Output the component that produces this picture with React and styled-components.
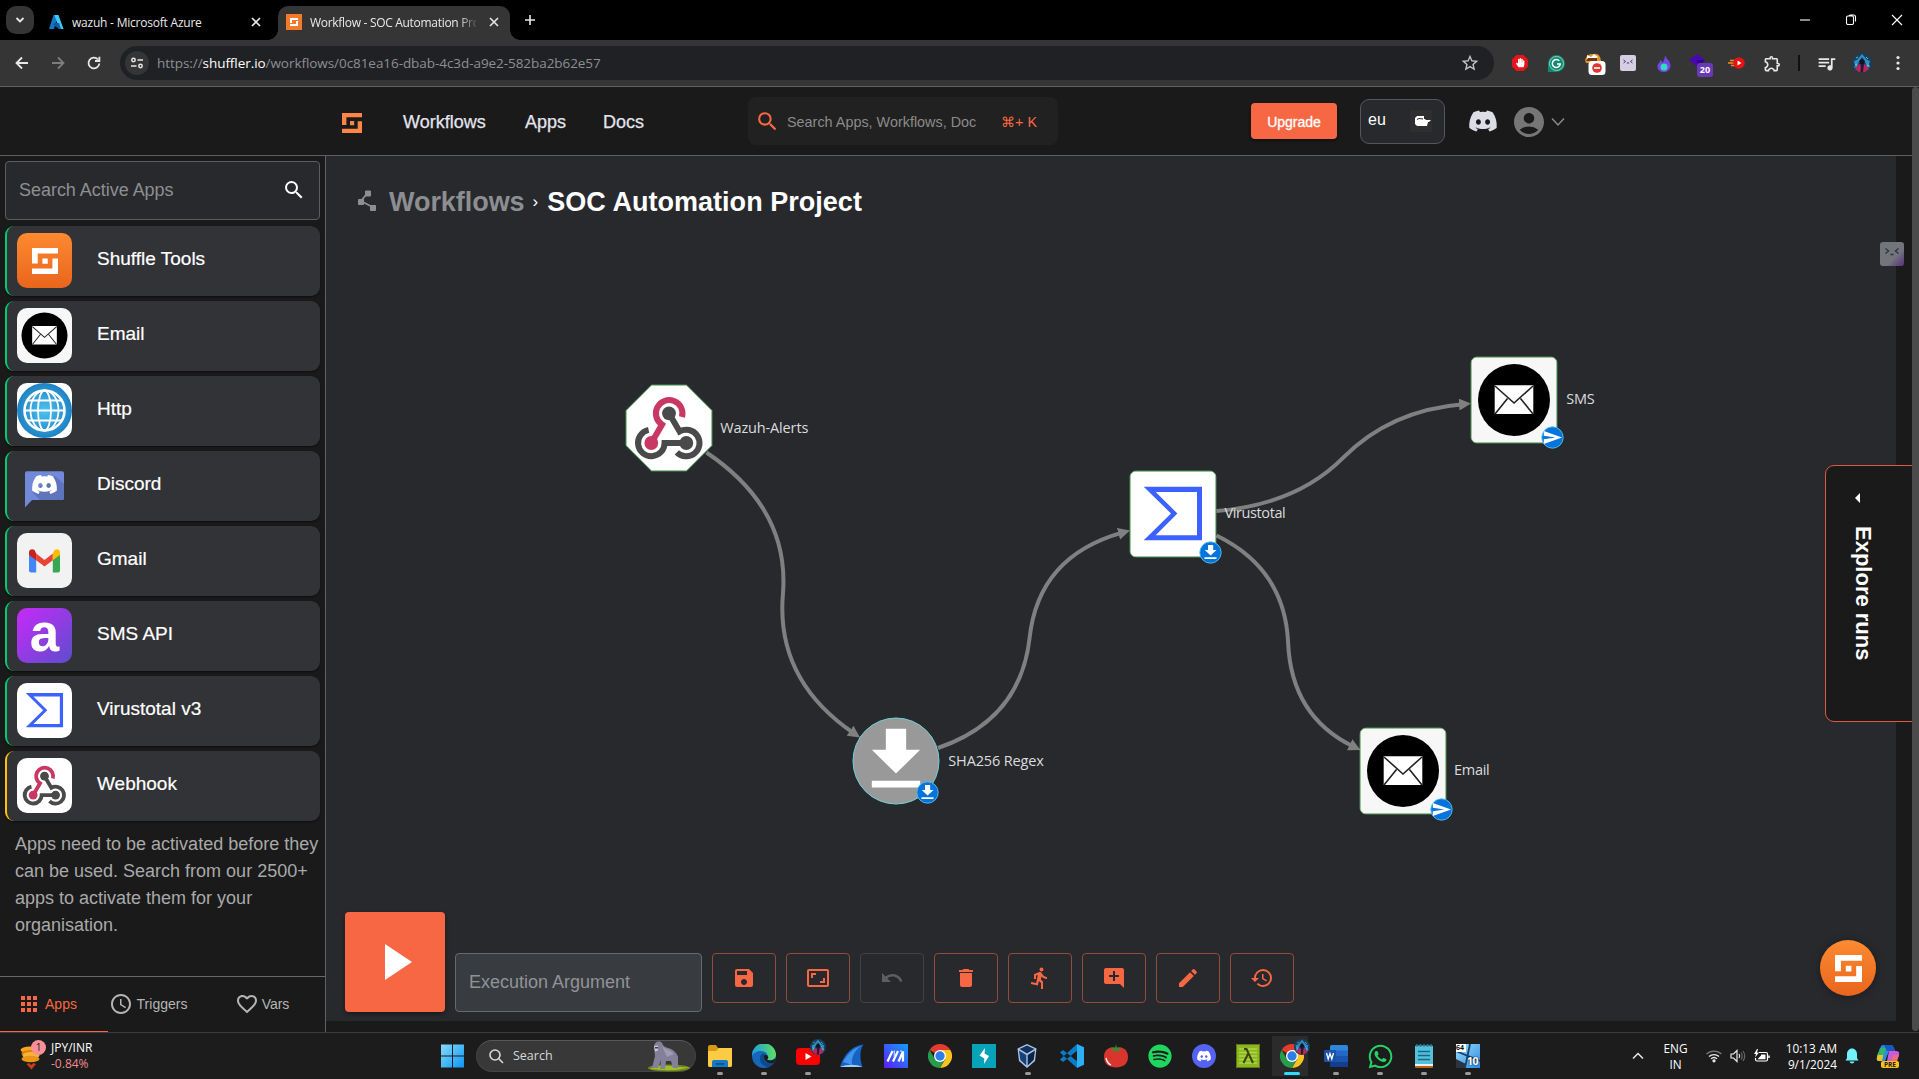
import React from "react";
import styled, { createGlobalStyle, css } from "styled-components";
import {
  MdSave, MdAspectRatio, MdUndo, MdDelete, MdDirectionsRun, MdAddComment, MdEdit,
  MdHistory, MdSearch, MdApps, MdAccessTime, MdFavoriteBorder,
  MdOutlineQueueMusic, MdStarOutline, MdOutlineExtension, MdAccountCircle,
} from "react-icons/md";
import { FaDiscord, FaSpotify, FaWhatsapp, FaHandPaper } from "react-icons/fa";

const ORANGE = "#f86743";
const UI = '"Open Sans", "Noto Sans", sans-serif';
const ARIAL = '"Liberation Sans", Arial, sans-serif';

const Global = createGlobalStyle`
  * { box-sizing: border-box; }
  body { margin: 0; background: #1a1a1a; overflow: hidden; font-family: ${ARIAL}; }
  svg { display: block; flex: none; }
`;

const Screen = styled.div`
  width: 1919px;
  height: 1079px;
  display: flex;
  flex-direction: column;
  overflow: hidden;
  color: #fff;
`;

/* ---------- browser frame ---------- */

const TabStrip = styled.div`
  height: 40px;
  background: #000;
  display: flex;
  align-items: flex-end;
  padding-left: 6px;
  font-family: ${UI};
  font-size: 12px;
`;
const TabMenu = styled.div`
  width: 28px;
  height: 28px;
  margin-bottom: 6px;
  border-radius: 10px;
  background: #353535;
  display: grid;
  place-items: center;
`;
const Tab = styled.div`
  position: relative;
  height: 34px;
  width: ${(p) => p.$w}px;
  padding: 0 8px 2px;
  margin-left: ${(p) => p.$ml}px;
  display: flex;
  align-items: center;
  border-radius: 10px 10px 0 0;
  background: ${(p) => (p.$active ? "#353535" : "transparent")};
  ${(p) => p.$active && css`
    &::before, &::after {
      content: "";
      position: absolute;
      bottom: 0;
      width: 10px;
      height: 10px;
    }
    &::before { left: -10px; background: radial-gradient(circle at 0 0, transparent 9.5px, #353535 10px); }
    &::after { right: -10px; background: radial-gradient(circle at 100% 0, transparent 9.5px, #353535 10px); }
  `}
`;
const TabTitle = styled.span`
  flex: 1;
  margin-left: 8px;
  margin-right: 10px;
  white-space: nowrap;
  overflow: hidden;
  color: #e9e9e9;
  letter-spacing: ${(p) => p.$ls}px;
  ${(p) => p.$fade && css`mask-image: linear-gradient(90deg, #000 148px, transparent 170px);`}
`;
const NewTab = styled.div`
  width: 28px;
  height: 28px;
  margin: 0 0 6px 6px;
  display: grid;
  place-items: center;
`;
const WindowButtons = styled.div`
  margin-left: auto;
  margin-right: -1px;
  height: 40px;
  display: flex;
`;
const WindowButton = styled.div`
  width: 46px;
  height: 40px;
  display: grid;
  place-items: center;
`;
const Toolbar = styled.div`
  height: 47px;
  background: #353535;
  border-bottom: 1px solid #606060;
  display: flex;
  align-items: center;
`;
const NavButtons = styled.div`
  width: 120px;
  padding-left: 4px;
  display: flex;
`;
const NavButton = styled.div`
  width: 36px;
  height: 36px;
  display: grid;
  place-items: center;
`;
const AddressBar = styled.div`
  width: 1374px;
  height: 34px;
  border-radius: 17px;
  background: #202124;
  padding: 0 14px 0 5px;
  display: flex;
  align-items: center;
  font: 13.5px ${UI};
  color: #8d8f93;
`;
const SiteInfo = styled.div`
  width: 24px;
  height: 24px;
  border-radius: 50%;
  background: #353535;
  display: grid;
  place-items: center;
  margin-right: 8px;
`;
const Url = styled.div`
  flex: 1;
  letter-spacing: ${(p) => p.$ls}px;
  b { font-weight: 400; color: #fff; }
`;
const Extensions = styled.div`
  display: flex;
  margin-left: 8px;
`;
const Extension = styled.div`
  position: relative;
  width: 36px;
  height: 36px;
  display: grid;
  place-items: center;
  padding-left: ${(p) => p.$nudge || 0}px;
`;
const CountBadge = styled.div`
  position: absolute;
  left: 15px;
  top: 18px;
  width: 16px;
  height: 14px;
  border-radius: 3px;
  background: #6b39b8;
  font: 700 9px/14px ${UI};
  text-align: center;
`;
const BarDivider = styled.div`
  width: 2px;
  height: 16px;
  margin: 10px 8px;
  background: #111;
`;

/* ---------- web page ---------- */

const Page = styled.div`
  height: 945px;
  display: flex;
  background: #1a1a1a;
`;
const Site = styled.div`
  position: relative;
  width: 1912px;
  display: flex;
  flex-direction: column;
`;
const Scrollbar = styled.div`
  width: 7px;
  height: 944px;
  border-radius: 4px;
  background: #4b4b4b;
`;
const Header = styled.header`
  height: 69px;
  border-bottom: 1px solid #5f5f63;
  padding-left: 342px;
  display: flex;
  align-items: center;
`;
const LogoBox = styled.div`
  width: 61px;
  padding-top: 3px;
`;
const NavLink = styled.a`
  width: ${(p) => p.$w}px;
  padding-top: 2px;
  font-size: 18px;
  color: #e3e4ee;
  -webkit-text-stroke: 0.25px #e3e4ee;
`;
const SiteSearch = styled.div`
  width: 310px;
  height: 48px;
  margin-bottom: 1px;
  border-radius: 8px;
  background: #212121;
  display: flex;
  align-items: center;
  padding: 2px 21px 0 7px;
  font-size: 14.4px;
  color: #8b8b8b;
  svg { color: ${ORANGE}; margin-right: 7px; }
`;
const Shortcut = styled.span`
  margin-left: auto;
  color: ${ORANGE};
  font-family: ${ARIAL};
`;
const UpgradeButton = styled.button`
  margin-left: 193px;
  width: 86px;
  height: 36px;
  padding: 2px 0 0;
  border: 0;
  border-radius: 4px;
  background: ${ORANGE};
  color: #fff;
  font: 14px ${ARIAL};
  -webkit-text-stroke: 0.3px #fff;
  box-shadow: 0 2px 3px rgba(0, 0, 0, 0.4);
`;
const RegionSelect = styled.div`
  margin-left: 23px;
  margin-top: 1px;
  width: 85px;
  height: 45px;
  border: 1px solid #54565b;
  border-radius: 9px;
  background: #27292d;
  padding: 0 12px 3px 7px;
  display: flex;
  align-items: center;
  justify-content: space-between;
  font-size: 16px;
`;
const Flag = styled.div`
  width: 22px;
  height: 22px;
  margin-top: 2px;
  padding-left: 4px;
  background: #2f2f2f;
  display: grid;
  place-items: center;
`;
const DiscordLink = styled.div`
  margin-left: 23px;
  width: 46px;
  color: #dcdde6;
`;
const Account = styled.div`
  display: flex;
  align-items: center;
  gap: 3px;
  margin-left: -3px;
  padding-top: 1px;
  color: #767676;
`;
const Body = styled.div`
  height: 876px;
  display: flex;
`;

/* ---------- sidebar ---------- */

const Sidebar = styled.aside`
  width: 326px;
  border-right: 1px solid #5f6166;
  display: flex;
  flex-direction: column;
`;
const AppSearch = styled.div`
  height: 59px;
  margin: 5px 5px 6px;
  border: 1px solid #5b5d61;
  border-radius: 4px;
  background: #27292d;
  display: flex;
  align-items: center;
  justify-content: space-between;
  padding: 0 13px 0 13px;
  font-size: 18px;
  letter-spacing: -0.03px;
  color: #8e8f91;
  svg { color: #fff; margin-bottom: 1px; }
`;
const AppList = styled.div`
  display: flex;
  flex-direction: column;
  gap: 5px;
  padding: 0 5px;
`;
const AppRow = styled.div`
  height: 70px;
  border-left: 2px solid ${(p) => p.$accent};
  border-radius: 9px;
  background: #323337;
  box-shadow: 0 1px 2px rgba(0, 0, 0, 0.5);
  display: flex;
  padding: 7px 0 0 10px;
`;
const AppName = styled.div`
  margin-left: 25px;
  font-size: 19px;
  line-height: 22px;
  padding-top: 15px;
  -webkit-text-stroke: 0.2px #fff;
`;
const AppIcon = styled.div`
  width: 55px;
  height: 55px;
  border-radius: 10px;
  overflow: hidden;
  display: grid;
  place-items: center;
  background: ${(p) => p.$bg};
`;
const SmsLetter = styled.span`
  align-self: start;
  font: 700 53px/49px ${ARIAL};
`;
const Hint = styled.p`
  margin: 10px 0 0;
  padding-left: 15px;
  font-size: 18px;
  line-height: 27px;
  color: #a9a9a9;
  white-space: pre-line;
`;
const SideTabs = styled.div`
  margin-top: auto;
  height: 56px;
  border-top: 1px solid #66686c;
  display: flex;
`;
const SideTab = styled.div`
  position: relative;
  width: ${(p) => p.$w}px;
  padding-bottom: 1px;
  display: flex;
  align-items: center;
  justify-content: center;
  gap: ${(p) => p.$gap}px;
  font-size: 14px;
  color: ${(p) => (p.$active ? ORANGE : "#b5b5b5")};
  ${(p) => p.$active && css`
    &::after {
      content: "";
      position: absolute;
      left: 0;
      bottom: 0;
      width: 108px;
      height: 1px;
      background: ${ORANGE};
    }
  `}
`;

/* ---------- workflow canvas ---------- */

const Canvas = styled.main`
  position: relative;
  width: 1570px;
  height: 865px;
  background: #27292d;
  display: flex;
  flex-direction: column;
  justify-content: space-between;
`;
const Breadcrumb = styled.div`
  height: 32px;
  margin: 30px 0 0 28px;
  display: flex;
  align-items: center;
  line-height: 32px;
  > svg { margin-bottom: 3px; }
`;
const Crumb = styled.span`
  margin-left: ${(p) => p.$ml}px;
  color: ${(p) => p.$color};
  font-size: ${(p) => p.$size || 27}px;
  font-weight: ${(p) => (p.$size ? 400 : 700)};
  letter-spacing: ${(p) => p.$ls || 0}px;
`;
const Diagram = styled.div`
  position: absolute;
  inset: 0;
`;
const NodeBox = styled.div`
  position: absolute;
  left: ${(p) => p.$x}px;
  top: ${(p) => p.$y}px;
  width: 86px;
  height: 86px;
`;
const NodeBadge = styled.div`
  position: absolute;
  left: ${(p) => p.$x}px;
  top: ${(p) => p.$y}px;
`;
const NodeLabel = styled.div`
  position: absolute;
  left: ${(p) => p.$dx}px;
  top: ${(p) => p.$dy || 33}px;
  font: 14.5px/20px ${UI};
  letter-spacing: ${(p) => p.$ls}px;
  color: #dcdcdd;
  white-space: nowrap;
`;
const RunBar = styled.div`
  display: flex;
  gap: 10px;
  padding: 0 0 9px 19px;
  align-items: flex-end;
`;
const RunButton = styled.div`
  width: 100px;
  height: 100px;
  border-radius: 4px;
  background: ${ORANGE};
  box-shadow: 0 2px 4px rgba(0, 0, 0, 0.4);
  display: grid;
  place-items: center;
`;
const ArgumentField = styled.div`
  width: 247px;
  height: 59px;
  border: 1px solid #66696d;
  border-radius: 4px;
  background: #383b40;
  padding: 0 13px;
  font-size: 18px;
  line-height: 56px;
  color: #919396;
`;
const ToolButton = styled.div`
  width: 64px;
  height: 50px;
  margin-bottom: 9px;
  border: 1px solid ${(p) => (p.$disabled ? "#404246" : "#944a3c")};
  border-radius: 4px;
  color: ${(p) => (p.$disabled ? "#5c5e61" : ORANGE)};
  display: grid;
  place-items: center;
  font-size: 24px;
`;
const RunsDrawer = styled.div`
  position: absolute;
  right: -8px;
  top: 378px;
  width: 95px;
  height: 257px;
  border: 1px solid #e2573f;
  border-radius: 9px;
  background: #1a1a1a;
  padding: 26px 0 0 25px;
  clip-path: inset(0 8px 0 0);
`;
const RunsLabel = styled.div`
  writing-mode: vertical-rl;
  margin-top: 22px;
  margin-left: -1px;
  font: 700 22px/26px ${ARIAL};
`;
const SideWidget = styled.div`
  position: absolute;
  left: 1880px;
  top: 155px;
  width: 24px;
  height: 24px;
  border-radius: 3px;
  background: linear-gradient(135deg, #73757c 62%, #5d417d 90%);
  display: grid;
  justify-content: center;
  padding-top: 5px;
`;
const HelpBubble = styled.div`
  position: absolute;
  left: 1820px;
  top: 853px;
  width: 56px;
  height: 56px;
  border-radius: 50%;
  background: linear-gradient(#fd8a30, #e9651d);
  box-shadow: 0 1px 8px rgba(0, 0, 0, 0.35);
  display: grid;
  place-items: center;
`;

/* ---------- taskbar ---------- */

const Taskbar = styled.div`
  height: 47px;
  background: #1c1c1c;
  border-top: 1px solid #3b3b3b;
  display: flex;
  align-items: center;
  font: 12px/16px ${UI};
`;
const Widget = styled.div`
  width: 441px;
  padding-left: 20px;
  display: flex;
  align-items: center;
  gap: 5px;
  font-size: 12px;
`;
const Change = styled.div`
  color: #f08b92;
`;
const StartButton = styled.div`
  width: 35px;
`;
const TaskSearch = styled.div`
  width: 220px;
  height: 32px;
  margin-right: 2px;
  border-radius: 16px;
  border: 1px solid #444;
  border-top-color: #585858;
  background: #383838;
  padding: 0 4px 0 11px;
  display: flex;
  align-items: center;
  gap: 9px;
  font-size: 12.5px;
  color: #d8d8d8;
  > svg:last-child { margin-left: auto; }
`;
const TaskItem = styled.div`
  position: relative;
  width: 44px;
  height: 46px;
  display: grid;
  place-items: center;
  &::after {
    content: "";
    position: absolute;
    left: ${(p) => (p.$state === "active" ? 14 : 19)}px;
    bottom: 4px;
    width: ${(p) => (p.$state === "active" ? 16 : 6)}px;
    height: 3px;
    border-radius: 2px;
    background: ${(p) => ({ active: "#2fd9ff", open: "#9a9a9a" }[p.$state] || "transparent")};
  }
  ${(p) => p.$state === "active" && css`
    background: linear-gradient(#2b2b2b, #2b2b2b) 2px 3px / 36px 40px no-repeat;
  `}
`;
const ProfileBadge = styled.div`
  position: absolute;
  right: 4px;
  top: 6px;
`;
const Tray = styled.div`
  margin-left: auto;
  padding-right: 19px;
  display: flex;
  align-items: center;
`;
const TrayCell = styled.div`
  width: ${(p) => p.$w}px;
  display: flex;
  flex-direction: column;
  align-items: ${(p) => (p.$end ? "flex-end" : "center")};
  white-space: nowrap;
  font-size: 11.8px;
`;

/* ---------- drawings ---------- */

const ShuffleMark = ({ size = 26, color = "#fff" }) => (
  <svg width={size} height={size} viewBox="0 0 26 26" fill={color}>
    <path d="M0 0H26V5.5H5.7V15.6H0ZM26 10.6V26H0V20.5H20.4V10.6ZM10.4 10.4h5.4v5.4h-5.4z" />
  </svg>
);

const MailMark = ({ size = 86 }) => (
  <svg width={size} height={size} viewBox="0 0 86 86">
    <circle cx="43" cy="43" r="36" fill="#000" />
    <path d="M23.7 28.3H62.3V57H23.7Z" fill="#fff" />
    <path d="M24 29 43 46 62 29M24 57 36.5 41.5M62 57 49.5 41.5" fill="none" stroke="#222" strokeWidth="1.6" />
  </svg>
);

const WebhookMark = ({ size = 86 }) => (
  <svg width={size} height={size} viewBox="0 0 86 86" fill="none" strokeWidth="6">
    <path d="M56 32A13.3 13.3 0 1 0 36 39.6L25.3 58" stroke="#c93763" />
    <path d="M22.6 44.9A13.3 13.3 0 1 0 38.6 58H60.3" stroke="#4a4a4a" />
    <path d="M50.8 67.4A13.3 13.3 0 1 0 53.6 46.5L43 28.3" stroke="#4a4a4a" />
    <circle cx="43" cy="28.3" r="6.9" fill="#4a4a4a" />
    <circle cx="60.3" cy="58" r="6.9" fill="#4a4a4a" />
    <circle cx="25.3" cy="58" r="6.9" fill="#c93763" />
  </svg>
);

const VirusTotalMark = ({ size = 86 }) => (
  <svg width={size} height={size} viewBox="0 0 86 86">
    <path fillRule="evenodd" fill="#3c61ff" d="M13.7 15.7H72V69.3H13.7L41 42.5ZM25.7 21 47.4 42.5 25.7 64.3H67V21Z" />
  </svg>
);

const DownloadMark = ({ size, color = "#fff" }) => (
  <svg width={size} height={size} viewBox="0 0 50 62" fill={color}>
    <path d="M14.5 0H35.5V22H50L25 46.5 0 22H14.5ZM0 54H50V61H0Z" />
  </svg>
);

const Globe = () => (
  <svg width="55" height="55" viewBox="0 0 55 55">
    <defs>
      <radialGradient id="globe"><stop offset="0" stopColor="#4cc3f2" /><stop offset="1" stopColor="#1f82c4" /></radialGradient>
    </defs>
    <circle cx="27.5" cy="27.5" r="27.5" fill="url(#globe)" />
    <g fill="none" stroke="#fff" strokeWidth="1.8">
      <circle cx="27.5" cy="27.5" r="20" strokeWidth="2.6" />
      <ellipse cx="27.5" cy="27.5" rx="6.5" ry="20" />
      <ellipse cx="27.5" cy="27.5" rx="14" ry="20" />
      <path d="M8 27.5H47M11 17.5H44M11 37.5H44" />
    </g>
  </svg>
);

const DiscordFlag = () => (
  <svg width="55" height="55" viewBox="0 0 55 55">
    <path d="M10 13.300H45a2 2 0 0 1 2 2V40a2 2 0 0 1-2 2H15L8 49.500V15.300a2 2 0 0 1 2-2Z" fill="#7289da" />
    <path d="M38 18 47 26V40a2 2 0 0 1-2 2H23L15 34Z" fill="#5f74bd" />
    <g transform="translate(14 13)">
      <FaDiscord size={27} color="#fff" />
    </g>
  </svg>
);

const GmailMark = () => (
  <svg width="31" height="24" viewBox="0 0 31 24">
    <path d="M0 5 7.200 10V23.500H2A2 2 0 0 1 0 21.500Z" fill="#4285f4" />
    <path d="M31 5 23.800 10V23.500H29A2 2 0 0 0 31 21.500Z" fill="#34a853" />
    <path d="M7.200 4.500 15.500 11 23.800 4.500V11.300L15.500 17.600 7.200 11.300Z" fill="#ea4335" />
    <path d="M0 3.500C0 0 3.500-.5 5.500 1L7.200 4.500V11.300L0 6Z" fill="#c5221f" />
    <path d="M31 3.500C31 0 27.500-.5 25.500 1L23.800 4.500V11.300L31 6Z" fill="#fbbc04" />
  </svg>
);

const Avatar = ({ size = 20 }) => (
  <svg width={size} height={size} viewBox="0 0 20 20">
    <circle cx="10" cy="10" r="10" fill="#17405e" />
    <path d="M10 1 5 7 2 8 3 12 2 15 5 14 7 8 10 4 13 8 15 15 18 14 17 11 18 8 15 7Z" fill="#3591c4" />
    <path d="M7.500 8Q10 4 12.500 8L12 11H8Z" fill="#101425" />
    <path d="M3 16 7 11 10 14 13 11 17 16 13 19H7Z" fill="#b8265c" />
    <path d="M9 11H12L11 19H8.500Z" fill="#2a1838" />
    <path d="M4 5 6 4M14 4 16 6M3 11 5 12M15 12 17 13" stroke="#8fd0ee" strokeWidth=".8" />
  </svg>
);

const Chrome = ({ size = 24 }) => (
  <svg width={size} height={size} viewBox="0 0 24 24">
    <path d="M12 12 1.600 6A12 12 0 0 1 22.400 6Z" fill="#e33b2e" />
    <path d="M12 6H22.400A12 12 0 0 1 12 24L17.200 15Z" fill="#fcc31e" />
    <path d="M6.800 15 1.600 6A12 12 0 0 0 12 24L17.200 15Z" fill="#2a9a4b" />
    <circle cx="12" cy="12" r="6" fill="#fff" />
    <circle cx="12" cy="12" r="4.700" fill="#2f7de9" />
  </svg>
);

const Gorilla = () => (
  <svg width="44" height="31" viewBox="0 0 44 31">
    <ellipse cx="22" cy="27" rx="21" ry="3.500" fill="#6f8c1b" />
    <path d="M3 28Q13 23 24 25T43 26Q30 31 3 28Z" fill="#a4bd2c" />
    <path d="M7 6C7 1 12-1 15 2 16 4 17 6 21 7 26 8 30 12 31 16L31 27H26L24 20 19 20 18 28H13L14 19 11 27H5L8 15Z" fill="#85809a" />
    <path d="M15 5C18 8 24 9 27 13L20 16Z" fill="#a09bb3" />
    <path d="M7 5 11 4.500V9.500L8 10.500Z" fill="#cfc6cf" /><path d="M8 6H11V7.500H8Z" fill="#3f3a50" />
  </svg>
);

const TaskIcons = {
  folder: (
    <svg width="24" height="22" viewBox="0 0 24 22">
      <path d="M0 2a2 2 0 0 1 2-2H8L10 3H22a2 2 0 0 1 2 2V20a2 2 0 0 1-2 2H2a2 2 0 0 1-2-2Z" fill="#d89a13" />
      <path d="M0 6H8L11 3H24V20a2 2 0 0 1-2 2H2a2 2 0 0 1-2-2Z" fill="#fbcb43" />
      <path d="M4 17a2 2 0 0 1 2-2H18a2 2 0 0 1 2 2V22H4Z" fill="#1478c8" /><path d="M8 18H16V20H8Z" fill="#0b549a" />
    </svg>
  ),
  edge: (
    <svg width="24" height="24" viewBox="0 0 24 24">
      <defs><linearGradient id="edge" x1="0" x2="1"><stop offset="0" stopColor="#1b9de2" /><stop offset="1" stopColor="#5fe05c" /></linearGradient></defs>
      <circle cx="12" cy="12" r="12" fill="#1667b8" />
      <path d="M0 12A12 12 0 0 1 24 10.500C24 15 20 17 15 16 18 12 14 7 9 7 5 7 1 9 0 12Z" fill="url(#edge)" />
      <path d="M9 11C6 16 10 23 17 23A12 12 0 0 0 22 18.500C18 20 12 19 11.500 14 11.500 12 12 11 13 10 12 9 10 9.500 9 11Z" fill="#0b4a8e" />
      <path d="M12 11.500C15 10 18 13 15 16 19 17 22 16 23.500 14 23 17 22 18.500 21 19 15 20 11 16 12 11.500Z" fill="#1c1c1c" />
    </svg>
  ),
  youtube: (
    <svg width="24" height="24" viewBox="0 0 24 24">
      <rect x="0" y="4" width="24" height="17" rx="4" fill="#f00" /><path d="M9.500 9 15.500 12.500 9.500 16Z" fill="#fff" />
    </svg>
  ),
  shark: (
    <svg width="24" height="24" viewBox="0 0 24 24">
      <path d="M0 23C4 10 12 2 23.500 0.500 19 7 20 16 22.500 23Z" fill="#1663c4" />
      <path d="M3 18C8 9 14 4 21 2 14 7 11 14 12 21Z" fill="#3f93ea" /><path d="M0 23C7 20 16 20 22.500 23Z" fill="#a9cbf2" />
    </svg>
  ),
  slashM: (
    <svg width="24" height="24" viewBox="0 0 24 24">
      <defs><linearGradient id="slm" x1="0" y1="1" x2="1" y2="0"><stop offset="0" stopColor="#5a1df5" /><stop offset="1" stopColor="#12a0fb" /></linearGradient></defs>
      <rect width="24" height="24" fill="url(#slm)" />
      <path d="M3.500 17.500 8.500 7M9 17.500 14 7M14.500 17.500 19 7.500V17.500" fill="none" stroke="#fff" strokeWidth="2.200" />
      <path d="M10.300 6.500V13M17 6V8" stroke="#c9d6ff" strokeWidth="1.200" />
    </svg>
  ),
  chrome: <Chrome />,
  burp: (
    <svg width="24" height="24" viewBox="0 0 24 24">
      <rect width="24" height="24" fill="#08a3b9" />
      <path d="M13 4 12.500 9.500 17 12 12 20 12.300 14.500 7.500 11.500Z" fill="#fff" />
    </svg>
  ),
  vbox: (
    <svg width="26" height="24" viewBox="0 0 26 24">
      <path d="M12 0 21.500 4.500 20 17 12 24 4 17 2.500 4.500Z" fill="#a9c6e6" />
      <path d="M12 1.500 19.500 5 12 9.500 4.500 5Z" fill="#12315f" /><path d="M4 6.500 11.300 11V21.500L5.300 16Z" fill="#1b4078" /><path d="M20 6.500 12.700 11V21.500L18.700 16Z" fill="#0d2448" />
    </svg>
  ),
  vscode: (
    <svg width="24" height="24" viewBox="0 0 24 24">
      <path d="M17 0 24 3.200V20.800L17 24Z" fill="#2bb0f4" />
      <path d="M17 0V6.700L3 18 0 15.600ZM17 24V17.300L3 6 0 8.400Z" fill="#0b7cc9" />
    </svg>
  ),
  tomato: (
    <svg width="24" height="24" viewBox="0 0 24 24">
      <path d="M12 4C19 2 24 6 24 13S19 23.500 12 23.500 0 20 0 13 5 2 12 4Z" fill="#d9352f" />
      <path d="M12 0 12.800 3.500 18 3.500 14.500 5.500 16 8 12 6.500 8 8 9.500 5.500 6 3.500 11.300 3.500Z" fill="#3a8d35" />
      <path d="M2 14Q3 19 7 21" stroke="#fff" strokeWidth="1.300" fill="none" />
    </svg>
  ),
  spotify: <FaSpotify size={24} color="#1ed760" />,
  discord: (
    <svg width="24" height="24" viewBox="0 0 24 24">
      <circle cx="12" cy="12" r="12" fill="#5662f2" />
      <g transform="translate(4.500 4.500)"><FaDiscord size={15} color="#fff" /></g>
    </svg>
  ),
  lambda: (
    <svg width="24" height="24" viewBox="0 0 24 24">
      <rect x="0.500" y="0.500" width="23" height="23" fill="#8cb81f" stroke="#5b7a10" />
      <path d="M3 5H21M3 8.500H21M3 12H21M3 15.500H21M3 19H21" stroke="#b3d34c" strokeWidth="1.300" />
      <path d="M8 5H10.500L17 19M12 10 7.500 19" fill="none" stroke="#39450f" strokeWidth="2" />
    </svg>
  ),
  word: (
    <svg width="24" height="22" viewBox="0 0 24 22">
      <rect x="6" width="18" height="22" rx="1.500" fill="#2f86dd" /><path d="M6 5.500H24V11H6Z" fill="#2467c4" /><path d="M6 11H24V16.500H6Z" fill="#1a54ac" /><path d="M6 16.500H24V20.500a1.500 1.500 0 0 1-1.500 1.500H6Z" fill="#103f91" />
      <rect y="5" width="12" height="12" rx="1" fill="#1b51a8" />
      <path d="M2.500 8 4.200 14 6 8.500 7.800 14 9.500 8" fill="none" stroke="#fff" strokeWidth="1.300" />
    </svg>
  ),
  whatsapp: <FaWhatsapp size={27} color="#26d366" />,
  notepad: (
    <svg width="20" height="24" viewBox="0 0 20 24">
      <rect x="1" y="1.500" width="18" height="20" rx="1" fill="#57bfd8" /><path d="M1 20H19V22H1Z" fill="#f1f1f1" /><path d="M1 22H19V23a1 1 0 0 1-1 1H2a1 1 0 0 1-1-1Z" fill="#b5651d" />
      <path d="M4 7.500H16M4 11.500H16M4 15.500H16" stroke="#0f6b8c" strokeWidth="1.500" /><path d="M3 0V3M6.500 0V3M10 0V3M13.500 0V3M17 0V3" stroke="#1b87a8" strokeWidth="1.300" />
    </svg>
  ),
};

const VmTile = styled.div`
  position: relative;
  width: 24px;
  height: 24px;
  background: linear-gradient(135deg, #9fdcf8, #2a8be6);
  svg { position: absolute; inset: 0; }
  span { position: absolute; font-family: ${UI}; font-weight: 700; }
  span:first-of-type { left: 0; top: 0; background: #fff; color: #111; font-size: 7px; line-height: 8px; width: 10px; }
  span:last-of-type { right: 2px; bottom: 1px; color: #fff; font-size: 10.5px; line-height: 12px; letter-spacing: -0.5px; text-shadow: 0 0 2px #000; }
`;
const CopilotWrap = styled.div`
  position: relative;
  width: 24px;
  height: 24px;
  margin-left: 9px;
`;
const PreTag = styled.span`
  position: absolute;
  left: 5px;
  bottom: 0;
  width: 18px;
  height: 7px;
  border-radius: 2px;
  background: #f9c01c;
  color: #1b1b1b;
  font: 700 6.5px/7px ${UI};
  text-align: center;
`;
const CoinCount = styled.div`
  position: relative;
  width: 26px;
  height: 30px;
  margin-top: -3px;
  span {
    position: absolute;
    right: 0;
    top: 0;
    width: 15px;
    height: 15px;
    border-radius: 50%;
    background: #fb8f97;
    color: #1b1b1b;
    font-size: 10px;
    line-height: 15px;
    text-align: center;
  }
`;

/* ---------- data ---------- */

const GREEN = "#02cb70";
const apps = [
  { name: "Shuffle Tools", bg: "linear-gradient(#fd8a30, #e9651d)", icon: <ShuffleMark /> },
  { name: "Email", bg: "#f7f7f7", icon: <MailMark size={55} /> },
  { name: "Http", bg: "#fff", icon: <Globe /> },
  { name: "Discord", bg: "transparent", icon: <DiscordFlag /> },
  { name: "Gmail", bg: "#f2f2f2", icon: <GmailMark /> },
  { name: "SMS API", bg: "linear-gradient(135deg, #bd2df5 10%, #5c4ecb)", icon: <SmsLetter>a</SmsLetter> },
  { name: "Virustotal v3", bg: "#fff", icon: <VirusTotalMark size={55} /> },
  { name: "Webhook", bg: "#fff", icon: <WebhookMark size={55} />, accent: "#fec107" },
];

const nodes = [
  { label: "Wazuh-Alerts", x: 626.3, y: 384.5, shape: "octagon", icon: <WebhookMark />, dx: 94, ls: -0.15 },
  { label: "SHA256 Regex", x: 853.3, y: 718.3, shape: "circle", icon: <DownloadMark size={60} />, dx: 95, badge: "down", bx: 63, by: 63, ls: -0.15 },
  { label: "Virustotal", x: 1129.5, y: 471.3, shape: "square", icon: <VirusTotalMark />, dx: 95, dy: 32, badge: "down", bx: 69.5, by: 69.5, ls: -0.4 },
  { label: "SMS", x: 1471.3, y: 357.3, shape: "square", icon: <MailMark />, tint: "#f7f7f7", dx: 95, dy: 32, badge: "send", bx: 70, by: 69 },
  { label: "Email", x: 1360, y: 727.5, shape: "square", icon: <MailMark />, tint: "#f7f7f7", dx: 94, dy: 32, badge: "send", bx: 69.5, by: 70 },
];

const edges = [
  { from: [669.3, 427.3], to: [896.5, 761.3], start: [706.5, 452.5], tip: [860, 737.5], bend: 54 },
  { from: [896.5, 761.3], to: [1172.7, 514.5], start: [938, 748], tip: [1130, 530.5], bend: 55, lean: -5 },
  { from: [1172.7, 514.5], to: [1514.3, 400.3], start: [1216.5, 511], tip: [1471, 403.5], bend: 30 },
  { from: [1172.7, 514.5], to: [1403.5, 770.7], start: [1216.5, 535.5], tip: [1360.5, 750], bend: 47 },
];

function edgePath({ from, to, start, tip, bend, lean = 0 }) {
  const dx = to[0] - from[0];
  const dy = to[1] - from[1];
  const len = Math.hypot(dx, dy);
  const side = dy > 0 ? 1 : -1;
  const nx = (side * dy) / len * bend;
  const ny = (-side * dx) / len * bend;
  const c1 = [from[0] + dx * 0.335 + nx + lean, from[1] + dy * 0.335 + ny];
  const c2 = [from[0] + dx * 0.665 - nx + lean, from[1] + dy * 0.665 - ny];
  const mid = [(c1[0] + c2[0]) / 2, (c1[1] + c2[1]) / 2];
  const tl = Math.hypot(tip[0] - c2[0], tip[1] - c2[1]);
  const end = [tip[0] - ((tip[0] - c2[0]) / tl) * 8, tip[1] - ((tip[1] - c2[1]) / tl) * 8];
  return `M${start}Q${c1} ${mid}Q${c2} ${end}`;
}

const shapes = {
  octagon: <path d="M25.500 .2H60.500L85.800 25.500V60.500L60.500 85.800H25.500L.2 60.500V25.500Z" stroke="#7cc47e" />,
  circle: <circle cx="43" cy="43" r="43" stroke="#6fd3dd" />,
  square: <rect x=".2" y=".2" width="85.600" height="85.600" rx="5.500" stroke="#7cc47e" />,
};

const StatusBadge = ({ kind }) => (
  <svg width="23" height="23" viewBox="0 0 23 23">
    <circle cx="11.500" cy="11.500" r="10.700" fill="#0574dd" stroke="#58c4e6" strokeWidth=".9" />
    {kind === "down" ? (
      <path d="M9 4H14.200V9H17.500L11.600 14.500 5.800 9H9ZM5.500 16.300H17.500V18H5.500Z" fill="#fff" />
    ) : (
      <path d="M2.800 5 21 11.500 2.800 18V13.300L14.500 11.500 2.800 9.800Z" fill="#fff" />
    )}
  </svg>
);

const WorkflowNode = ({ node }) => (
  <NodeBox $x={node.x - 326} $y={node.y - 156}>
    <svg width="86" height="86" viewBox="0 0 86 86" fill={node.shape === "circle" ? "#999" : node.tint || "#fff"} overflow="visible">
      {shapes[node.shape]}
      {node.shape === "circle" ? <g transform="translate(13 10.500)">{node.icon}</g> : node.icon}
    </svg>
    {node.badge && (
      <NodeBadge $x={node.bx} $y={node.by}><StatusBadge kind={node.badge} /></NodeBadge>
    )}
    <NodeLabel $dx={node.dx} $dy={node.dy} $ls={node.ls || -0.3}>{node.label}</NodeLabel>
  </NodeBox>
);

const tools = [
  { key: "save", Icon: MdSave }, { key: "fit", Icon: MdAspectRatio },
  { key: "undo", Icon: MdUndo, disabled: true }, { key: "delete", Icon: MdDelete },
  { key: "run", Icon: MdDirectionsRun }, { key: "comment", Icon: MdAddComment },
  { key: "edit", Icon: MdEdit }, { key: "history", Icon: MdHistory },
];

const taskItems = [
  ["folder", "open"], ["edge", "open"], ["youtube", "open", true], ["shark"], ["slashM"],
  ["chrome"], ["burp"], ["vbox", "open"], ["vscode"], ["tomato"], ["spotify"], ["discord"],
  ["lambda"], ["chrome", "active", true], ["word", "open"], ["whatsapp", "open"], ["notepad", "open"],
];

const Line = ({ d, w = 1.6, color = "#e8e8e8", size = 16 }) => (
  <svg width={size} height={size} viewBox="0 0 16 16" fill="none" stroke={color} strokeWidth={w}>
    <path d={d} />
  </svg>
);

/* ---------- sections ---------- */

const BrowserFrame = () => (
  <>
    <TabStrip>
      <TabMenu><Line d="M4.500 6 8 9.500 11.500 6" w={1.8} /></TabMenu>
      <Tab $w={232} $ml={6}>
        <svg width="16" height="16" viewBox="0 0 16 16">
          <path d="M5.500 1H10L6 15H1Z" fill="#1576c4" /><path d="M6.500 1H10.500L15.500 15H11Z" fill="#3ccbf4" /><path d="M6 9H11L13 15H11L5 10.500Z" fill="#0f5ba3" />
        </svg>
        <TabTitle $ls={-0.22}>wazuh - Microsoft Azure</TabTitle>
        <Line d="M4 4 12 12M12 4 4 12" />
      </Tab>
      <Tab $w={232} $ml={6} $active>
        <svg width="16" height="16" viewBox="0 0 16 16">
          <rect width="16" height="16" fill="#f37a28" />
          <path d="M4 4H12V6H6V9H4ZM12 7V12H4V10H10V7Z" fill="#fff" />
        </svg>
        <TabTitle $ls={-0.3} $fade>Workflow - SOC Automation Project</TabTitle>
        <Line d="M4 4 12 12M12 4 4 12" />
      </Tab>
      <NewTab><Line d="M8 3V13M3 8H13" /></NewTab>
      <WindowButtons>
        <WindowButton><Line d="M3 8H13" w={1.1} color="#fff" /></WindowButton>
        <WindowButton><Line d="M3.500 5.500a1.500 1.500 0 0 1 1.500-1.500H9a1.500 1.500 0 0 1 1.500 1.500V11a1.500 1.500 0 0 1-1.500 1.500H5A1.500 1.500 0 0 1 3.500 11ZM6 3.500C6.500 3 7 3 8 3H10.500Q12.500 3 12.500 5V9.500" w={1.1} color="#fff" /></WindowButton>
        <WindowButton><Line d="M3 3 13 13M13 3 3 13" w={1.1} color="#fff" /></WindowButton>
      </WindowButtons>
    </TabStrip>
    <Toolbar>
      <NavButtons>
        <NavButton><Line d="M14 8H3M8 2.500 2.500 8 8 13.500" w={1.8} /></NavButton>
        <NavButton><Line d="M2 8H13M8 2.500 13.500 8 8 13.500" w={1.8} color="#7d7d7d" /></NavButton>
        <NavButton><Line d="M13.300 8.500A5.400 5.400 0 1 1 12 4.500M13.400 1.800V6H9" w={1.8} /></NavButton>
      </NavButtons>
      <AddressBar>
        <SiteInfo>
          <svg width="14" height="14" viewBox="0 0 14 14" fill="none" stroke="#e8e8e8" strokeWidth="1.500">
            <circle cx="3.500" cy="4" r="1.700" /><path d="M7.500 4H13M1 10H6.500" /><circle cx="10.500" cy="10" r="1.700" />
          </svg>
        </SiteInfo>
        <Url $ls={-0.06}>https://<b>shuffler.io</b>/workflows/0c81ea16-dbab-4c3d-a9e2-582ba2b62e57</Url>
        <MdStarOutline size={20} color="#c7c7c7" />
      </AddressBar>
      <Extensions>
        <Extension>
          <svg width="18" height="18" viewBox="0 0 18 18">
            <path d="M5.500 1H12.500L17 5.500V12.500L12.500 17H5.500L1 12.500V5.500Z" fill="#e5151b" />
            <g transform="translate(4.500 4)"><FaHandPaper size={9.5} color="#fff" /></g>
          </svg>
        </Extension>
        <Extension>
          <svg width="17" height="17" viewBox="0 0 17 17">
            <path d="M8.500 0A8.500 8.500 0 1 1 8.500 17H0V8.500A8.500 8.500 0 0 1 8.500 0Z" fill="#0f8a70" />
            <circle cx="8.500" cy="8.500" r="7" fill="none" stroke="#cfe9e2" strokeWidth=".7" />
            <path d="M11.300 5.800A4 4 0 1 0 12.300 9H9" fill="none" stroke="#fff" strokeWidth="1.500" />
          </svg>
        </Extension>
        <Extension $nudge={4}>
          <svg width="24" height="24" viewBox="0 0 24 24">
            <path d="M3 9Q5 2 11 3 18 1 19 10L16 12H4Z" fill="#e8902c" /><path d="M5 4 9 6 12 3 16 6 14 8 5 8Z" fill="#fff" /><path d="M6 7H15V10H4Z" fill="#6d3a12" />
            <rect x="6.500" y="10" width="17" height="14" rx="3.500" fill="#fff" /><circle cx="15" cy="17" r="4.800" fill="#e0362f" /><path d="M12 17H18" stroke="#fff" strokeWidth="1.600" />
          </svg>
        </Extension>
        <Extension>
          <svg width="16" height="16" viewBox="0 0 16 16">
            <rect width="16" height="16" rx="2" fill="#d4cfe2" /><path d="M3.500 5 5.500 6.500 3.500 8M12.500 5 10.500 6.500 12.500 8M6.800 8H9.200" stroke="#443e63" fill="none" />
          </svg>
        </Extension>
        <Extension>
          <svg width="14" height="17" viewBox="0 0 14 17">
            <path d="M8 0C9 4 14 6 13.500 11.500 13 15 10 17 7 17S0 15 0.500 11C1 8 3 8 3.500 5 5 6 5 7 5.500 8 7 6 8 3 8 0Z" fill="#7445e6" />
            <circle cx="7" cy="12" r="3.500" fill="#37d8c0" />
          </svg>
        </Extension>
        <Extension>
          <svg width="24" height="24" viewBox="0 0 24 24"><path d="M9 3 17 9 10 16 1 9Z" fill="#4a06b3" /><path d="M9 9 17 9 10 16Z" fill="#2f0384" /></svg>
          <CountBadge>20</CountBadge>
        </Extension>
        <Extension $nudge={2}>
          <svg width="18" height="14" viewBox="0 0 18 14">
            <path d="M2 4.500H9M0 7H8M3 9.500H9" stroke="#ff8a1a" strokeWidth="1.400" /><circle cx="11" cy="7" r="5.800" fill="#e91212" /><path d="M9.500 4.500 13.500 7 9.500 9.500Z" fill="#fff" />
          </svg>
        </Extension>
        <Extension><MdOutlineExtension size={19} color="#e8e8e8" /></Extension>
        <BarDivider />
        <Extension><MdOutlineQueueMusic size={21} color="#e8e8e8" /></Extension>
        <Extension><Avatar /></Extension>
        <Extension>
          <svg width="4" height="16" viewBox="0 0 4 16" fill="#e8e8e8"><circle cx="2" cy="2.500" r="1.600" /><circle cx="2" cy="8" r="1.600" /><circle cx="2" cy="13.500" r="1.600" /></svg>
        </Extension>
      </Extensions>
    </Toolbar>
  </>
);

const SiteHeader = () => (
  <Header>
    <LogoBox><ShuffleMark size={20} color="#ff8544" /></LogoBox>
    <NavLink $w={122}>Workflows</NavLink>
    <NavLink $w={78}>Apps</NavLink>
    <NavLink $w={145}>Docs</NavLink>
    <SiteSearch>
      <MdSearch size={25} />
      Search Apps, Workflows, Doc
      <Shortcut>⌘+ K</Shortcut>
    </SiteSearch>
    <UpgradeButton>Upgrade</UpgradeButton>
    <RegionSelect>
      eu
      <Flag>
        <svg width="16" height="12" viewBox="0 0 16 12"><path d="M0 3 2 1H9V4H10.500V5H16L14 7H13L12 11H2L0 9Z" fill="#fff" /><path d="M2 4.500 4 3.500 8 4" fill="none" stroke="#2f2f2f" /></svg>
      </Flag>
    </RegionSelect>
    <DiscordLink><FaDiscord size={30} /></DiscordLink>
    <Account>
      <MdAccountCircle size={36} />
      <Line d="M2 4.500 8 11 14 4.500" w={1.5} color="#8a8a8a" />
    </Account>
  </Header>
);

const AppSidebar = () => (
  <Sidebar>
    <AppSearch>Search Active Apps<MdSearch size={24} /></AppSearch>
    <AppList>
      {apps.map((a) => (
        <AppRow key={a.name} $accent={a.accent || GREEN}>
          <AppIcon $bg={a.bg}>{a.icon}</AppIcon>
          <AppName>{a.name}</AppName>
        </AppRow>
      ))}
    </AppList>
    <Hint>{"Apps need to be activated before they\ncan be used. Search from our 2500+\napps to activate them for your\norganisation."}</Hint>
    <SideTabs>
      <SideTab $w={94} $gap={4} $active><MdApps size={24} />Apps</SideTab>
      <SideTab $w={108} $gap={4}><MdAccessTime size={24} />Triggers</SideTab>
      <SideTab $w={120} $gap={3}><MdFavoriteBorder size={24} />Vars</SideTab>
    </SideTabs>
  </Sidebar>
);

const WorkflowCanvas = () => (
  <Canvas>
    <Diagram>
      <svg width="1570" height="865" viewBox="326 156 1570 865" fill="none">
        <defs>
          <marker id="arrow" markerUnits="userSpaceOnUse" markerWidth="14" markerHeight="14" refX="4" refY="6" orient="auto">
            <path d="M0 0 12 6 0 12Z" fill="#808080" />
          </marker>
        </defs>
        {edges.map((e, i) => (
          <path key={i} d={edgePath(e)} stroke="#808080" strokeWidth="4" markerEnd="url(#arrow)" />
        ))}
      </svg>
      {nodes.map((n) => <WorkflowNode key={n.label} node={n} />)}
    </Diagram>
    <Breadcrumb>
      <svg width="28" height="24" viewBox="0 0 28 24" fill="#8d8e91" stroke="#8d8e91">
        <path d="M13.500 4 7 12 18.500 18" fill="none" strokeWidth="1.800" />
        <path d="M11.500 2H16.500V7H11.500ZM4.500 10.500H9.500V15.500H4.500ZM16.500 16.500H21.500V21.500H16.500Z" />
      </svg>
      <Crumb $ml={7} $color="#8d8e91" $ls={-0.05}>Workflows</Crumb>
      <Crumb $ml={8} $color="#fff" $size={17}>›</Crumb>
      <Crumb $ml={9} $color="#fff" $ls={0.03}>SOC Automation Project</Crumb>
    </Breadcrumb>
    <RunBar>
      <RunButton>
        <svg width="100" height="100" viewBox="0 0 100 100"><path d="M40 32 67 50 40 68Z" fill="#fff" /></svg>
      </RunButton>
      <ArgumentField>Execution Argument</ArgumentField>
      {tools.map(({ key, Icon, disabled }) => (
        <ToolButton key={key} $disabled={disabled}><Icon /></ToolButton>
      ))}
    </RunBar>
  </Canvas>
);

const TaskbarSection = () => (
  <Taskbar>
    <Widget>
      <CoinCount>
        <svg width="26" height="30" viewBox="0 0 26 30">
          <ellipse cx="10" cy="10" rx="9.500" ry="3.500" fill="#f6a623" /><ellipse cx="10" cy="13.500" rx="8.500" ry="3.500" fill="#d9820f" /><ellipse cx="11" cy="15.500" rx="8.500" ry="3.500" fill="#f9b233" /><ellipse cx="10.500" cy="19" rx="9" ry="3.300" fill="#e8951b" />
          <path d="M6.500 24 9 23 11 25 13.500 23 16 24 11.500 29.500Z" fill="#c8401a" />
        </svg>
        <span>1</span>
      </CoinCount>
      <div>
        <div>JPY/INR</div>
        <Change>-0.84%</Change>
      </div>
    </Widget>
    <StartButton>
      <svg width="23" height="24" viewBox="0 0 23 24">
        <defs><linearGradient id="win" x1="0" y1="0" x2="1" y2="1"><stop offset="0" stopColor="#86dcfb" /><stop offset="1" stopColor="#0c95f2" /></linearGradient></defs>
        <path d="M0 .5H11V11.500H0ZM12 .5H23V11.500H12ZM0 12.500H11V23.500H0ZM12 12.500H23V23.500H12Z" fill="url(#win)" />
      </svg>
    </StartButton>
    <TaskSearch>
      <Line d="M7 2A5 5 0 1 0 7 12A5 5 0 1 0 7 2ZM10.800 10.800 15 15" color="#d8d8d8" />
      Search
      <Gorilla />
    </TaskSearch>
    {taskItems.map(([name, state, profile], i) => (
      <TaskItem key={i} $state={state}>
        {TaskIcons[name]}
        {profile && <ProfileBadge><Avatar size={16} /></ProfileBadge>}
      </TaskItem>
    ))}
    <TaskItem $state="open">
      <VmTile>
        <svg width="24" height="24" viewBox="0 0 24 24"><path d="M0 15 10 20 9 24H0Z" fill="#2d3440" /><path d="M14 0 9 24M0 7 24 17" stroke="#17406b" strokeWidth="1.800" fill="none" /></svg>
        <span>64</span><span>10</span>
      </VmTile>
    </TaskItem>
    <Tray>
      <TrayCell $w={41}><Line d="M3 10.500 8 5.500 13 10.500" w={1.5} /></TrayCell>
      <TrayCell $w={35}><div>ENG</div><div>IN</div></TrayCell>
      <TrayCell $w={41}>
        <svg width="16" height="14" viewBox="0 0 16 14" fill="none" stroke="#e8e8e8" strokeWidth="1.300">
          <path d="M.5 5A11 11 0 0 1 15.500 5" stroke="#777" /><path d="M3 7.500A7.500 7.500 0 0 1 13 7.500M5 9.800A4.500 4.500 0 0 1 11 9.800" /><circle cx="8" cy="11.800" r="1" fill="#e8e8e8" />
        </svg>
      </TrayCell>
      <TrayCell $w={7}>
        <svg width="16" height="14" viewBox="0 0 16 14" fill="none" stroke="#e8e8e8" strokeWidth="1.200">
          <path d="M1 5H3.500L7 1.500V12.500L3.500 9H1Z" /><path d="M9 5Q10.500 7 9 9" /><path d="M11 3.500Q13.500 7 11 10.500M13 2Q16.500 7 13 12" stroke="#666" />
        </svg>
      </TrayCell>
      <TrayCell $w={41}>
        <svg width="17" height="14" viewBox="0 0 17 14" fill="none" stroke="#fff" strokeWidth="1.200">
          <path d="M6 3.500H13Q14.500 3.500 14.500 5V10.500Q14.500 12 13 12H4Q2.500 12 2.500 10.500V9" /><path d="M8 5.500H12.500V10.200H4.500L8 6.500Z" fill="#fff" stroke="none" /><path d="M16 6.500V9" strokeWidth="1.500" /><path d="M4 0 1 5H3L2 8.500 6 3.500H4L5 0Z" fill="#fff" stroke="none" />
        </svg>
      </TrayCell>
      <TrayCell $w={55} $end><div>10:13 AM</div><div>9/1/2024</div></TrayCell>
      <TrayCell $w={30}>
        <svg width="14" height="16" viewBox="0 0 14 16" fill="#71f1fb"><path d="M7 .5C10 .5 12 3 12 6V10L13.500 12.500H.5L2 10V6C2 3 4 .5 7 .5ZM4.500 13.500H9.500Q9 15.500 7 15.500T4.500 13.500Z" /></svg>
      </TrayCell>
      <CopilotWrap>
        <svg width="24" height="24" viewBox="0 0 24 24">
          <path d="M5 2Q6 1 8 1H15Q17 1 18 4L19 7H13L9 17H3Q0 17 1 13Z" fill="#2b8be0" />
          <path d="M2 9 8 8 6 17H3Q0 17 1 13Z" fill="#e5c52c" /><path d="M4 4H10L8 11H1.500Z" fill="#35b36c" /><path d="M8 1H15Q17 1 18 4L18.500 7H11Z" fill="#1757c2" />
          <path d="M13 7H20Q24 7 23 11L21 17H11Z" fill="#c95be0" /><path d="M17 11H23L21 17H15Z" fill="#ef6c7d" />
        </svg>
        <PreTag>PRE</PreTag>
      </CopilotWrap>
    </Tray>
  </Taskbar>
);

export default function App() {
  return (
    <Screen>
      <Global />
      <BrowserFrame />
      <Page>
        <Site>
          <SiteHeader />
          <Body>
            <AppSidebar />
            <WorkflowCanvas />
          </Body>
          <RunsDrawer>
            <svg width="12" height="12" viewBox="0 0 12 12"><path d="M9 1V11L4 6Z" fill="#fff" /></svg>
            <RunsLabel>Explore runs</RunsLabel>
          </RunsDrawer>
          <SideWidget>
            <svg width="16" height="10" viewBox="0 0 16 10" fill="none" stroke="#33353c" strokeWidth="1.500">
              <path d="M1.500 1.500 4.500 4 1.500 6.500M14.500 1.500 11.500 4 14.500 6.500M6.500 7.500H9.500" />
            </svg>
          </SideWidget>
          <HelpBubble><ShuffleMark size={27} /></HelpBubble>
        </Site>
        <Scrollbar />
      </Page>
      <TaskbarSection />
    </Screen>
  );
}
